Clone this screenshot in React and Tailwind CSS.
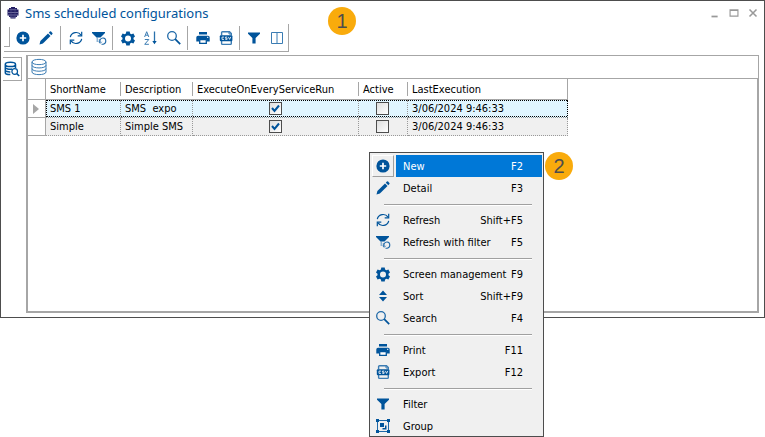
import React from "react";

const FONT = "font-['DejaVu_Sans_Condensed','DejaVu_Sans',Tahoma,sans-serif]";

function Icon({ children, className = "size-4" }) {
  return (
    <svg viewBox="0 0 16 16" className={className} fill="none" stroke="none" aria-hidden="true">
      {children}
    </svg>
  );
}

const PlusIcon = () => (
  <Icon>
    <circle cx="8" cy="8" r="6.6" fill="#00549b" />
    <path d="M8 4.8v6.4M4.8 8h6.4" stroke="#fff" strokeWidth="1.7" />
  </Icon>
);

const PencilIcon = () => (
  <Icon>
    <path d="M1.5 14.5l.9-3.4 7.6-7.6 2.5 2.5-7.6 7.6z" fill="#00549b" />
    <path d="M10.8 2.7l1.1-1.1q.6-.5 1.200 0l1.300 1.300q.5.6 0 1.200l-1.100 1.100z" fill="#00549b" />
  </Icon>
);

const RefreshIcon = () => (
  <Icon>
    <path d="M2.300 7.200A5.900 5.900 0 0 1 13 5.200M13.700 8.800A5.900 5.900 0 0 1 3 10.800" stroke="#00549b" strokeWidth="1.200" />
    <path d="M13.700 1.800v4h-4M2.300 14.200v-4h4" stroke="#00549b" strokeWidth="1.200" />
  </Icon>
);

const FilterRefreshIcon = () => (
  <Icon>
    <path d="M1 2h13v1L9.500 7.500H5.500L1 3z" fill="#00549b" />
    <path d="M6.200 7v5" stroke="#5b93c1" strokeWidth="1" />
    <path d="M8.300 9v3.500" stroke="#5b93c1" strokeWidth="1" />
    <path d="M9.200 12.300a3 3 0 0 1 3-4.300q2.600.3 2.600 3t-2.600 3.300h-1.700" stroke="#1f69a8" strokeWidth="1.100" />
    <path d="M8 11.500l1.200 1.800 1.500-1.500" stroke="#1f69a8" strokeWidth=".9" />
  </Icon>
);

const GearIcon = () => (
  <Icon>
    <path
      fillRule="evenodd"
      fill="#00549b"
      d="M6.300 1.500h3.400l.4 2 1.300.8 2-.7 1.600 2.900-1.500 1.300v1.400l1.500 1.300-1.600 2.900-2-.7-1.300.8-.4 2H6.300l-.4-2-1.300-.8-2 .7L1 10.500l1.500-1.300V7.800L1 6.500l1.600-2.900 2 .7 1.300-.8zM8 5.500a3 3 0 1 0 0 6 3 3 0 0 0 0-6z"
    />
  </Icon>
);

const AzIcon = () => (
  <Icon>
    <path d="M1.600 7L3.700 1.700 5.800 7M2.400 5.200h2.600M1.800 9.500h4L1.700 14.300h4.200" stroke="#3b7cb3" strokeWidth="1" />
    <path d="M11.500 1.500v11" stroke="#2a71ac" strokeWidth="1.300" />
    <path d="M9.300 11h4.400l-2.200 3.200z" fill="#00549b" />
  </Icon>
);

const SearchIcon = () => (
  <Icon>
    <circle cx="6" cy="6" r="4.300" stroke="#1f69a8" strokeWidth="1.300" />
    <path d="M9.200 9.200l5 5" stroke="#00549b" strokeWidth="1.700" />
  </Icon>
);

const PrintIcon = () => (
  <Icon>
    <path d="M4 2h8v2.500H4z" fill="#00549b" />
    <path d="M3 5.700h10q1.700 0 1.700 1.700v4H12V9H4v2.400H1.300v-4q0-1.700 1.700-1.700z" fill="#00549b" />
    <path d="M4.700 9.700h6.600v3.600H4.700z" fill="#fff" stroke="#00549b" strokeWidth="1.300" />
    <path d="M12 7.300h1.300" stroke="#fff" strokeWidth="1" />
  </Icon>
);

const CsvIcon = () => (
  <Icon>
    <path d="M3.600 5.500V2.600q0-.9.900-.9h7l1.800 1.800v2M3.600 11v2.500q0 .9.900.9h7.900q.9 0 .9-.9V11" stroke="#3b7cb3" strokeWidth="1.400" />
    <path d="M11 1.700v2.300h2.300" stroke="#3b7cb3" strokeWidth="1" />
    <rect x="1.800" y="5.200" width="12.600" height="6" rx="1" fill="#00549b" />
    <path d="M6 7.100H4v2.300h2M9.200 7.100H7.400v1.100h1.700v1.200H7.300M10.400 6.900l1.200 2.500 1.200-2.500" stroke="#fff" strokeWidth=".8" />
  </Icon>
);

const FunnelIcon = () => (
  <Icon>
    <path d="M2 2.500h12v1.300L9.600 8v5.500H6.400V8L2 3.800z" fill="#00549b" />
  </Icon>
);

const ColumnsIcon = () => (
  <Icon>
    <path d="M2.500 2.500h11v11h-11zM8 2.500v11" stroke="#3b7cb3" strokeWidth="1" />
  </Icon>
);

const SortIcon = () => (
  <Icon>
    <path d="M4 7l4-4.500L12 7zM4 9h8l-4 4.500z" fill="#00549b" />
  </Icon>
);

const GroupIcon = () => (
  <Icon>
    <path d="M2.500 2.500h11v11h-11z" stroke="#1f69a8" strokeWidth="1" />
    <path d="M1 1h3v3H1zM12 1h3v3h-3zM1 12h3v3H1zM12 12h3v3h-3z" fill="#00549b" />
    <path d="M5 5h4v4H5z" fill="#00549b" />
    <path d="M10 7.500h1.500v4h-4V10H10z" fill="#00549b" />
  </Icon>
);

const DatabaseIcon = () => (
  <svg viewBox="0 0 16 18" className="h-[18px] w-4" fill="none" aria-hidden="true">
    <path
      d="M1 4C1 .5 15 .5 15 4S1 7.500 1 4v10c0 3.500 14 3.500 14 0V4M1 7.300c0 3.500 14 3.500 14 0M1 10.600c0 3.500 14 3.500 14 0"
      stroke="#3b7cb3"
      strokeWidth="1"
    />
  </svg>
);

const DatabaseSearchIcon = () => (
  <Icon>
    <path
      d="M1.300 3.400c0-2.800 10.200-2.800 10.200 0s-10.200 2.800-10.200 0v8.300c0 1.200 2.400 1.900 5 1.900M11.500 3.400V7M1.300 6.200c0 1.800 4 2.400 7 1.800M1.300 9c0 1.400 2.500 2 5 1.900"
      stroke="#00549b"
      strokeWidth="1.500"
    />
    <circle cx="10.700" cy="10.500" r="2.800" stroke="#00549b" strokeWidth="1.200" />
    <path d="M12.700 12.500l2.500 2.600" stroke="#00549b" strokeWidth="1.500" />
  </Icon>
);

const AppIcon = () => (
  <svg viewBox="0 0 12 12" className="size-3" aria-hidden="true">
    <path d="M4 0h4v1h2v1.500h1.500v6H10V10H8.500v1.500h-5V10H2V8.500H.5v-6H2V1h2z" fill="#211c62" />
    <path d="M2.500 2.700h7M.5 5.500h11M.5 8h11M3 10.300h6" stroke="#8b89b4" strokeWidth=".7" />
    <path d="M4 1v10M8 1v10" stroke="#56528c" strokeWidth=".5" />
  </svg>
);

const toolGroups = [
  [["New", PlusIcon], ["Detail", PencilIcon]],
  [["Refresh", RefreshIcon], ["Refresh with filter", FilterRefreshIcon]],
  [["Screen management", GearIcon], ["Sort", AzIcon], ["Search", SearchIcon]],
  [["Print", PrintIcon], ["Export", CsvIcon]],
  [["Filter", FunnelIcon], ["Columns", ColumnsIcon]],
];

const menuGroups = [
  [["New", "F2", PlusIcon], ["Detail", "F3", PencilIcon]],
  [["Refresh", "Shift+F5", RefreshIcon], ["Refresh with filter", "F5", FilterRefreshIcon]],
  [["Screen management", "F9", GearIcon], ["Sort", "Shift+F9", SortIcon], ["Search", "F4", SearchIcon]],
  [["Print", "F11", PrintIcon], ["Export", "F12", CsvIcon]],
  [["Filter", "", FunnelIcon], ["Group", "", GroupIcon]],
];

const columns = ["ShortName", "Description", "ExecuteOnEveryServiceRun", "Active", "LastExecution"];

const rows = [
  { name: "SMS 1", description: "SMS  expo", every: true, active: false, last: "3/06/2024 9:46:33" },
  { name: "Simple", description: "Simple SMS", every: true, active: false, last: "3/06/2024 9:46:33" },
];

function TitleBar() {
  return (
    <header className="flex h-[23px] items-center pr-[4px] pl-[6px]">
      <AppIcon />
      <h1 className="ml-[6px] flex-1 font-['Noto_Sans',Tahoma,sans-serif] text-[13px] leading-[22px] text-[#00549b]">
        Sms scheduled configurations
      </h1>
      <div className="flex gap-[5px]">
        <button aria-label="Minimize" className="flex size-[14px] items-center justify-center">
          <Icon className="size-[14px]"><path d="M4 12h7" stroke="#999" strokeWidth="2" /></Icon>
        </button>
        <button aria-label="Maximize" className="flex size-[14px] items-center justify-center">
          <Icon className="size-[14px]"><path d="M3.500 4.500h9v7h-9zM3 5h10" stroke="#999" strokeWidth="1.300" /></Icon>
        </button>
        <button aria-label="Close" className="flex size-[14px] items-center justify-center">
          <Icon className="size-[14px]"><path d="M4 4l8 8M12 4l-8 8" stroke="#999" strokeWidth="1.800" /></Icon>
        </button>
      </div>
    </header>
  );
}

function Toolbar() {
  return (
    <div role="toolbar" className="ml-[3px] flex h-7 w-fit items-start border-r border-b border-[#a6a6a6]">
      <span className="mt-[3px] h-5 w-[6px] border-r border-b border-[#a6a6a6]" />
      {toolGroups.map((group, i) => (
        <div
          key={i}
          className="mt-[2px] flex h-6 items-center border-r border-[#a6a6a6] pr-[2px] pl-[3px] first-of-type:pr-[3px] first-of-type:pl-px last:border-r-0 last:pr-0 last:pl-[2px]"
        >
          {group.map(([label, Glyph]) => (
            <button key={label} aria-label={label} className="flex h-6 w-[23px] items-center justify-center">
              <Glyph />
            </button>
          ))}
        </div>
      ))}
    </div>
  );
}

function Check({ checked, label }) {
  return (
    <span className="relative block size-[13px]">
      <input
        type="checkbox"
        aria-label={label}
        defaultChecked={checked}
        className="peer block size-[13px] appearance-none border border-[#4d4d4d] bg-linear-to-br from-[#dedede] to-white"
      />
      <svg viewBox="0 0 13 13" className="pointer-events-none absolute inset-0 hidden size-[13px] peer-checked:block" aria-hidden="true">
        <path d="M3 6l2.500 3L10 3.500" stroke="#00549b" strokeWidth="2" fill="none" />
      </svg>
    </span>
  );
}

function Grid() {
  return (
    <table className={`w-[540px] table-fixed border-separate border-spacing-0 text-left text-[11px] text-black ${FONT}`}>
      <colgroup>
        <col className="w-[18px]" />
        <col className="w-[75px]" />
        <col className="w-[72px]" />
        <col className="w-[166px]" />
        <col className="w-[49px]" />
        <col className="w-[160px]" />
      </colgroup>
      <thead>
        <tr className="h-[21px]">
          <td className="border-r border-b border-[#a6a6a6] p-0" />
          {columns.map((c, i) => (
            <th key={c} scope="col" className="border-b border-[#a6a6a6] p-0 font-normal last:border-r">
              <span className={`block h-[14px] pt-px pl-1 leading-[14px] ${i < columns.length - 1 ? "border-r border-[#a6a6a6]" : ""}`}>
                {c}
              </span>
            </th>
          ))}
        </tr>
      </thead>
      <tbody>
        {rows.map((r, i) => {
          const cell = "h-[18px] border-r border-b border-dotted border-[#999] p-0 whitespace-pre";
          const tone = i === 0 ? "bg-[#e0f5ff]" : "bg-[#f0f0f0]";
          const line = `flex h-[17px] items-center ${i === 0 ? "border-y border-dotted border-black" : ""}`;
          const text = `${line} pt-[2px]`;
          const box = `${line} justify-center pr-px`;
          return (
            <tr key={r.name} className={tone}>
              <td className="h-[18px] border-r border-b border-[#a6a6a6] bg-white p-0">
                {i === 0 && (
                  <svg viewBox="0 0 6 10" className="ml-[5px] h-[10px] w-[6px]" aria-hidden="true">
                    <path d="M0 0l6 5-6 5z" fill="#a6a6a6" />
                  </svg>
                )}
              </td>
              <td className={cell}><div className={`${text} ${i === 0 ? "border-l pl-[3px]" : "pl-1"}`}>{r.name}</div></td>
              <td className={cell}><div className={`${text} pl-1`}>{r.description}</div></td>
              <td className={cell}><div className={box}><Check checked={r.every} label={`${r.name} execute on every service run`} /></div></td>
              <td className={cell}><div className={box}><Check checked={r.active} label={`${r.name} active`} /></div></td>
              <td className={`${cell} ${i === 0 ? "border-r-black" : ""}`}><div className={`${text} pl-1`}>{r.last}</div></td>
            </tr>
          );
        })}
      </tbody>
    </table>
  );
}

function ContextMenu() {
  return (
    <div className={`absolute top-[152px] left-[369px] w-[175px] border border-[#4d4d4d] bg-[#f0f0f0] pt-[2px] text-[11px] text-black ${FONT}`}>
      <ul role="menu" className="-mb-px">
        {menuGroups.map((group, g) => (
          <React.Fragment key={g}>
            {g > 0 && (
              <li role="separator" className="mr-[11px] ml-[14px] flex h-[10px] items-center pt-[2px]">
                <span className="h-[2px] flex-1 border-t border-b border-t-[#a0a0a0] border-b-white" />
              </li>
            )}
            {group.map(([label, key, Glyph]) => {
              const active = label === "New";
              return (
                <li key={label} role="none">
                  <button role="menuitem" className="flex h-[22px] w-full items-center pr-px pl-[2px] text-left">
                    <span
                      className={`mr-[2px] flex size-[22px] items-center justify-center border ${
                        active ? "border-t-white border-r-[#a0a0a0] border-b-[#a0a0a0] border-l-white" : "border-transparent"
                      }`}
                    >
                      <Glyph />
                    </span>
                    <span className={`flex h-[22px] flex-1 items-center justify-between pt-[2px] pr-[19px] pl-[7px] whitespace-nowrap ${active ? "bg-[#0078d7] text-white" : ""}`}>
                      <span>{label}</span>
                      <span>{key}</span>
                    </span>
                  </button>
                </li>
              );
            })}
          </React.Fragment>
        ))}
      </ul>
    </div>
  );
}

function Badge({ n, className }) {
  return (
    <span className={`absolute flex size-7 items-center justify-center rounded-full bg-[#f9ab0c] font-['Liberation_Sans',Arial,sans-serif] text-[20px] leading-none text-[#4d4d4d] ${className}`}>
      {n}
    </span>
  );
}

export default function App() {
  return (
    <main className="relative min-h-screen bg-white">
      <section className="flex flex-col border border-[#4d4d4d]">
        <TitleBar />
        <Toolbar />
        <div className="mt-[3px] flex pr-[5px] pb-1 pl-[2px]">
          <aside className="pt-[2px] pr-1">
            <button aria-label="Search data" className="flex h-6 w-[19px] items-center justify-center border-t border-r border-b border-[#a6a6a6]">
              <DatabaseSearchIcon />
            </button>
          </aside>
          <div className="flex min-w-0 flex-1 flex-col border-t border-b-2 border-l-2 border-[#a6a6a6]">
            <div className="flex h-[22px] items-center border-r border-[#a6a6a6] pl-[3px]">
              <DatabaseIcon />
            </div>
            <div className="h-[233px] border-t border-r-2 border-[#a6a6a6]">
              <Grid />
            </div>
          </div>
        </div>
      </section>
      <Badge n="1" className="top-[7px] left-[328px]" />
      <ContextMenu />
      <Badge n="2" className="top-[152px] left-[545px]" />
    </main>
  );
}
